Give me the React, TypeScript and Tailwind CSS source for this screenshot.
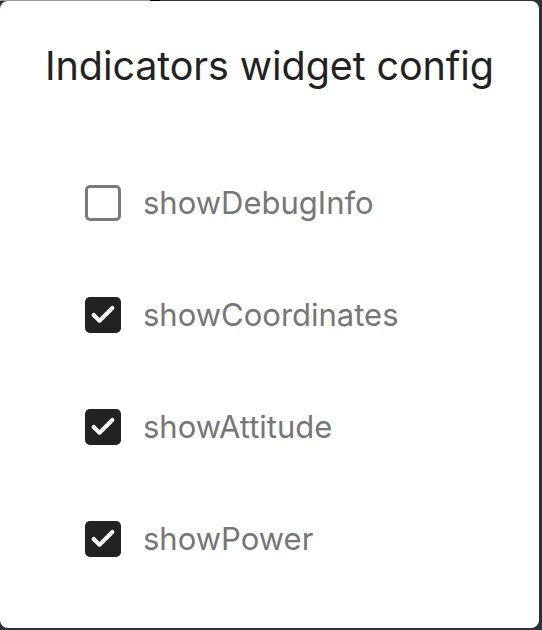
import { Check } from "lucide-react"

const options = [
  { name: "showDebugInfo", checked: false },
  { name: "showCoordinates", checked: true },
  { name: "showAttitude", checked: true },
  { name: "showPower", checked: true },
]

function Checkbox({ checked }: { checked: boolean }) {
  if (checked) {
    return (
      <div className="w-9 h-9 rounded-[5px] bg-[#222222] flex items-center justify-center shrink-0">
        <Check className="w-7 h-7 text-white" strokeWidth={3.5} />
      </div>
    )
  }
  return <div className="w-9 h-9 rounded-[5px] border-[3px] border-[#7a7a7a] bg-white shrink-0" />
}

export default function App() {
  return (
    <div className="w-[542px] h-[630px] bg-[#2c323c] overflow-hidden flex flex-col font-['Inter',sans-serif]">
      <div className="flex h-px shrink-0">
        <div className="w-[150px] bg-[#9a9a9a]" />
        <div className="w-[10px] bg-black" />
      </div>
      <div className="w-[539px] h-[627px] bg-white rounded-lg flex flex-col items-center">
        <h1 className="mt-[40px] text-[39.5px] leading-[50px] text-[#222222] tracking-[-0.1px]">
          Indicators widget config
        </h1>
        <div className="mt-[94px] self-start pl-[85px] flex flex-col gap-[76px]">
          {options.map((o) => (
            <label key={o.name} className="flex items-center gap-[22px] h-9">
              <Checkbox checked={o.checked} />
              <span className="text-[31px] text-[#767676] leading-9">{o.name}</span>
            </label>
          ))}
        </div>
      </div>
    </div>
  )
}
